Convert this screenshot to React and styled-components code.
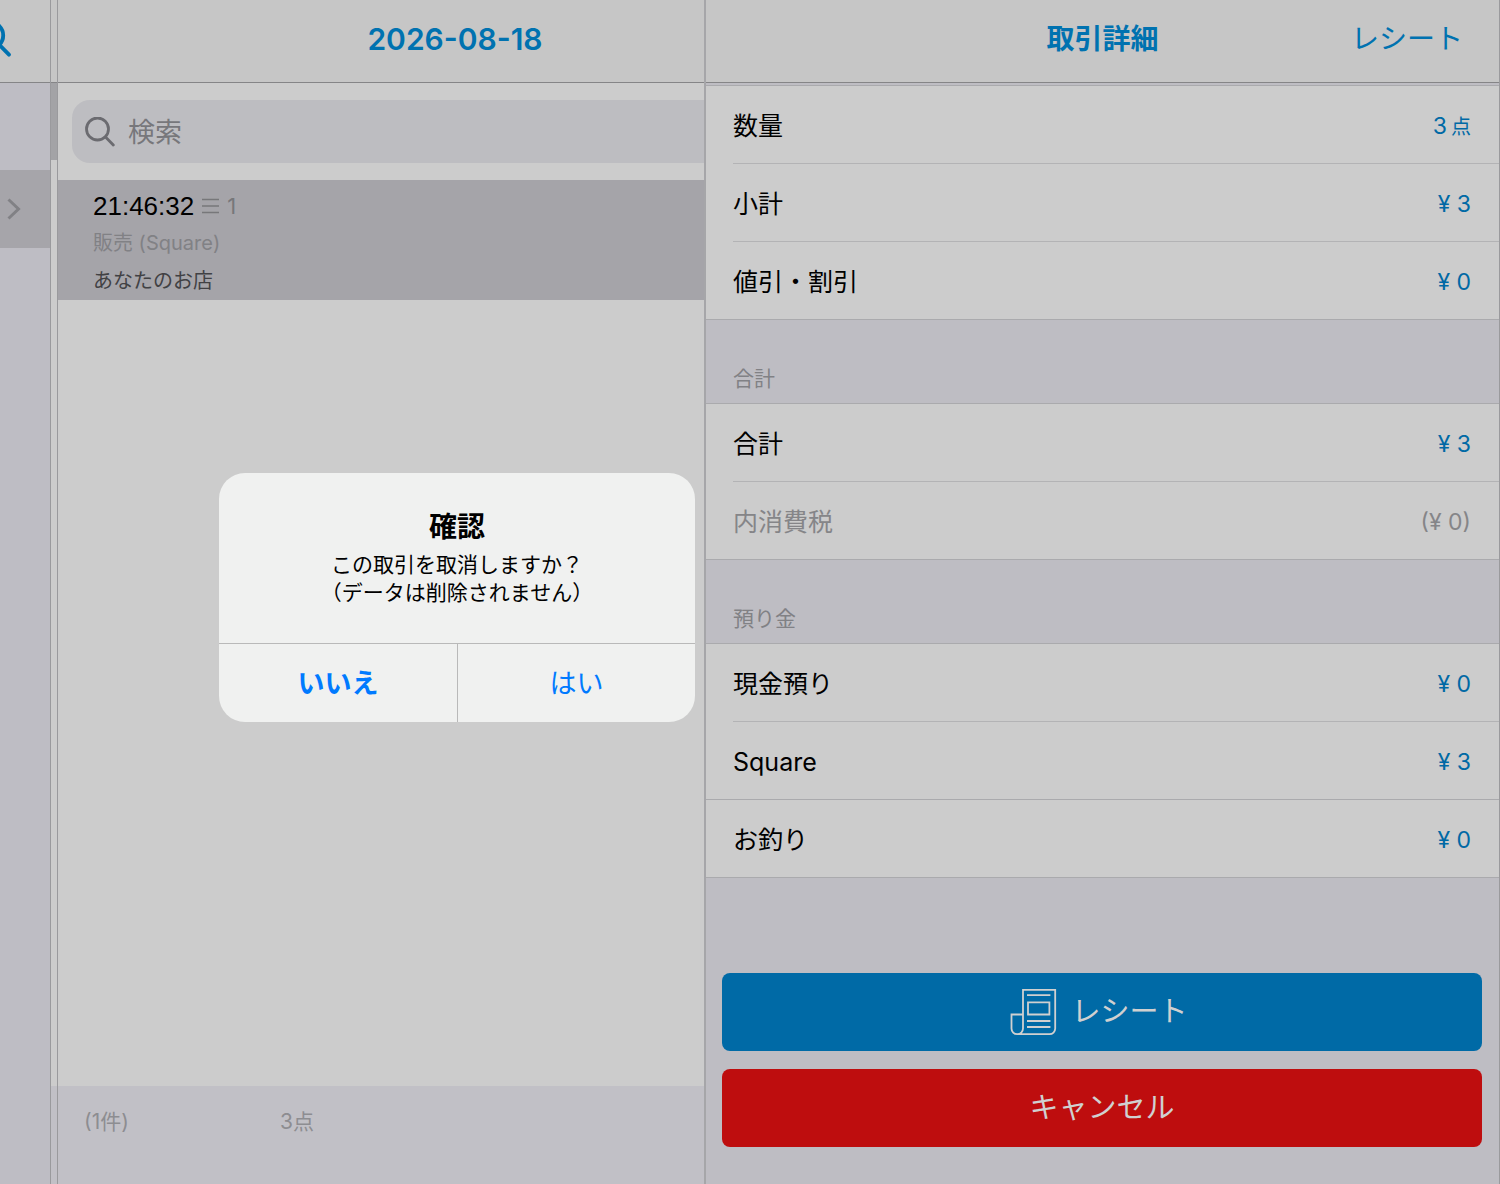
import React, { useState } from 'react'
import styled, { createGlobalStyle } from 'styled-components';

const blue = '#0072b0';
const line = '#aaaaad';

const sale = {
  time: '21:46:32',
  items: 1,
  type: '販売 (Square)',
  shop: 'あなたのお店'
}

const sections = [
  {
    rows: [
      { label: '数量', value: '3', unit: '点' },
      { label: '小計', value: '¥ 3' },
      { label: '値引・割引', value: '¥ 0' }
    ]
  },
  {
    title: '合計',
    rows: [
      { label: '合計', value: '¥ 3' },
      { label: '内消費税', value: '(¥ 0)', muted: true }
    ]
  },
  {
    title: '預り金',
    rows: [
      { label: '現金預り', value: '¥ 0' },
      { label: 'Square', value: '¥ 3', full: true },
      { label: 'お釣り', value: '¥ 0' }
    ]
  }
]

const GlobalStyle = createGlobalStyle`
  * {
    box-sizing: border-box;
  }
  body {
    margin: 0;
    background: #cccccc;
    font-family: Inter, 'Noto Sans CJK JP', sans-serif;
  }
  button, input {
    font-family: inherit;
  }
  h1, h2, h3, p, dl, dd, ul {
    margin: 0;
    padding: 0;
  }
`;

const Screen = styled.div`
  display: grid;
  grid-template-columns: 51px 7px minmax(0, 648fr) minmax(0, 794fr);
  min-height: 100vh;
  overflow: hidden;
`;

const Column = styled.div`
  display: flex;
  flex-direction: column;
  min-width: 0;
  background: ${props => props.$bg || '#cccccc'};
  border-right: ${props => props.$edge || 1}px solid ${props => props.$edgeColor || '#9a9a9d'};
`;

const Bar = styled.header`
  display: grid;
  grid-template-columns: 1fr auto 1fr;
  align-items: center;
  flex: none;
  height: 83px;
  padding: 0 36px 4px;
  background: #c6c6c6;
  border-bottom: 1px solid #858587;
`;

const ListBar = styled(Bar)`
  padding-left: 184px;
`;

const BarTitle = styled.h1`
  grid-column: 2;
  color: ${blue};
  font-size: ${props => props.$size || 28}px;
  line-height: 40px;
  font-weight: 600;
`;

const BarLink = styled.button`
  justify-self: end;
  padding: 0;
  border: 0;
  background: none;
  color: ${blue};
  font-size: 28px;
  line-height: 40px;
`;

const RailBar = styled(Bar)`
  display: flex;
  justify-content: flex-end;
  padding: 0 39px 4px 0;
`;

const GutterBar = styled(Bar)`
  padding: 0;
`;

const IconButton = styled.button`
  display: flex;
  flex: none;
  padding: 0;
  border: 0;
  background: none;
  color: ${blue};
`;

const RailItem = styled.button`
  display: flex;
  align-items: center;
  justify-content: flex-end;
  height: 78px;
  margin-top: 87px;
  padding: 0 29px 0 0;
  border: 0;
  background: #a6a5aa;
  color: #818185;
`;

const ScrollThumb = styled.div`
  height: 77px;
  background: #a3a3a6;
`;

const Spacer = styled.div`
  flex: 1;
`;

const Footer = styled.footer`
  display: flex;
  flex: none;
  height: 98px;
  padding: 20px 26px;
  background: #c1c0c6;
  color: #8d8d91;
  font-size: 21px;
  line-height: 32px;
`;

const GutterFooter = styled(Footer)`
  padding: 0;
`;

const FooterCount = styled.span`
  width: 196px;
`;

const SearchBox = styled.label`
  display: flex;
  align-items: center;
  gap: 13px;
  height: 63px;
  margin: 17px 0 17px 14px;
  padding-left: 13px;
  border-radius: 18px 0 0 18px;
  background: #bdbdc1;
  color: #6b6b70;
`;

const SearchInput = styled.input`
  flex: 1;
  min-width: 0;
  padding: 2px 0 0;
  border: 0;
  outline: 0;
  background: none;
  color: #000;
  font-size: 27px;
  line-height: 40px;
  &::placeholder {
    color: #77777b;
    opacity: 1;
  }
`;

const SaleRow = styled.li`
  display: flex;
  flex-direction: column;
  height: 120px;
  padding: 10px 35px 0;
  background: #a5a4a9;
  list-style: none;
`;

const SaleTop = styled.div`
  display: flex;
  align-items: center;
  gap: 8px;
  height: 38px;
  padding-bottom: 2px;
  color: #77777a;
  font-size: 22px;
`;

const SaleTime = styled.span`
  color: #000;
  font-family: 'Liberation Sans', sans-serif;
  font-size: 26px;
`;

const SaleText = styled.p`
  color: ${props => (props.$dark ? '#414144' : '#818185')};
  font-size: 20px;
  line-height: 38px;
`;

const ScrollEdge = styled.div`
  height: 2px;
`;

const SectionTitle = styled.h2`
  height: 83px;
  padding: 43px 27px 0;
  color: #818185;
  font-size: 21px;
  line-height: 32px;
  font-weight: 400;
`;

const Rows = styled.dl`
  background: #cccccc;
  border-top: 1px solid ${line};
`;

const Row = styled.div`
  display: flex;
  height: 78px;
  padding-left: 27px;
  border-bottom: ${props => (props.$full ? `1px solid ${line}` : 0)};
`;

const RowInner = styled.div`
  display: flex;
  flex: 1;
  align-items: center;
  justify-content: space-between;
  padding-right: 28px;
  border-bottom: ${props => (props.$full ? 0 : '1px solid #b3b3b5')};
`;

const Label = styled.dt`
  padding-top: 2px;
  color: ${props => (props.$muted ? '#858588' : '#000')};
  font-size: 25px;
  line-height: 32px;
`;

const Value = styled.dd`
  padding-top: 3px;
  color: ${props => (props.$muted ? '#858588' : '#0069a5')};
  font-size: 23px;
  line-height: 32px;
`;

const Unit = styled.span`
  padding-left: 4px;
  font-size: 20px;
`;

const Actions = styled.div`
  display: flex;
  flex-direction: column;
  gap: 18px;
  padding: 95px 17px 36px 16px;
`;

const ActionButton = styled.button`
  display: flex;
  align-items: center;
  justify-content: center;
  gap: 14px;
  height: 78px;
  padding: ${props => (props.$danger ? '0' : '0 6px 0 0')};
  border: 0;
  border-radius: 8px;
  background: ${props => (props.$danger ? '#be0d0e' : '#006aa6')};
  color: #d0d0d0;
  font-size: 29px;
  line-height: 40px;
`;

const Overlay = styled.div`
  position: absolute;
  top: 473px;
  left: 219px;
  width: 476px;
`;

const Dialog = styled.section`
  overflow: hidden;
  border-radius: 26px;
  background: #f0f1f0;
  text-align: center;
`;

const DialogBody = styled.div`
  padding: 34px 20px 36px;
`;

const DialogTitle = styled.h2`
  font-size: 28px;
  line-height: 40px;
  font-weight: 700;
`;

const DialogText = styled.p`
  padding-top: 4px;
  font-size: 21px;
  line-height: 28px;
`;

const DialogButtons = styled.div`
  display: grid;
  grid-template-columns: 1fr 1fr;
  border-top: 1px solid #b9b9b9;
`;

const DialogButton = styled.button`
  height: 78px;
  padding: 2px 0 0;
  border: 0;
  border-left: ${props => (props.$bold ? 0 : '1px solid #b9b9b9')};
  background: none;
  color: #007aff;
  font-size: 27px;
  line-height: 40px;
  font-weight: ${props => (props.$bold ? 700 : 400)};
`;

const SearchIcon = ({ size = 30, stroke = 2.8 }) => (
  <svg width={size} height={size} viewBox="0 0 30 30" fill="none" stroke="currentColor" strokeWidth={stroke} strokeLinecap="round" aria-hidden="true">
    <circle cx="12.5" cy="12" r="11" />
    <path d="M20.5 20L28.3 28" />
  </svg>
)

const ChevronIcon = () => (
  <svg width="14" height="22" viewBox="0 0 14 22" fill="none" stroke="currentColor" strokeWidth="3" aria-hidden="true">
    <path d="M1.5 1.5L11.5 11L1.5 20.5" />
  </svg>
)

const LinesIcon = () => (
  <svg width="17" height="16" viewBox="0 0 17 16" stroke="currentColor" strokeWidth="1.6" aria-hidden="true">
    <path d="M0 1.5H17M0 8H17M0 14.5H17" />
  </svg>
)

const ReceiptIcon = () => (
  <svg width="47" height="48" viewBox="0 0 47 48" fill="none" stroke="currentColor" strokeWidth="1.8" aria-hidden="true">
    <path d="M13 26.5H1.5V40.5a5.7 5.7 0 0 0 5.7 5.7H39.5a5.7 5.7 0 0 0 5.7-5.7V1.8H13V40.5a5.7 5.7 0 0 1-5.7 5.7" />
    <path d="M18 14.3H39.4V26.5H18Z" />
    <path d="M17 7.2H40.4M17 33H40.4M17 39H40.4" />
  </svg>
)

export default function App() {
  const [open, setOpen] = useState(true)

  return (
    <>
      <GlobalStyle />
      <Screen>
        <Column $bg="#bebdc4">
          <RailBar>
            <IconButton aria-label="検索"><SearchIcon size={36} stroke={3.2} /></IconButton>
          </RailBar>
          <RailItem aria-label="2026-08-18"><ChevronIcon /></RailItem>
        </Column>

        <Column>
          <GutterBar />
          <ScrollThumb />
          <Spacer />
          <GutterFooter />
        </Column>

        <Column $edge={2} $edgeColor="#a6a6a9">
          <ListBar><BarTitle $size={30}>2026-08-18</BarTitle></ListBar>
          <SearchBox>
            <SearchIcon />
            <SearchInput type="search" placeholder="検索" aria-label="検索" />
          </SearchBox>
          <ul>
            <SaleRow>
              <SaleTop>
                <SaleTime>{sale.time}</SaleTime>
                <LinesIcon />
                <span>{sale.items}</span>
              </SaleTop>
              <SaleText>{sale.type}</SaleText>
              <SaleText $dark>{sale.shop}</SaleText>
            </SaleRow>
          </ul>
          <Spacer />
          <Footer>
            <FooterCount>(1件)</FooterCount>
            <span>3点</span>
          </Footer>
        </Column>

        <Column $bg="#bebdc3">
          <Bar>
            <BarTitle>取引詳細</BarTitle>
            <BarLink>レシート</BarLink>
          </Bar>
          <ScrollEdge />
          {sections.map((section, i) => (
            <section key={i}>
              {section.title && <SectionTitle>{section.title}</SectionTitle>}
              <Rows>
                {section.rows.map((row, j) => {
                  const full = row.full || j === section.rows.length - 1
                  return (
                    <Row key={row.label} $full={full}>
                      <RowInner $full={full}>
                        <Label $muted={row.muted}>{row.label}</Label>
                        <Value $muted={row.muted}>
                          {row.value}
                          {row.unit && <Unit>{row.unit}</Unit>}
                        </Value>
                      </RowInner>
                    </Row>
                  )
                })}
              </Rows>
            </section>
          ))}
          <Actions>
            <ActionButton><ReceiptIcon />レシート</ActionButton>
            <ActionButton $danger>キャンセル</ActionButton>
          </Actions>
        </Column>
      </Screen>

      {open && (
        <Overlay>
          <Dialog role="alertdialog" aria-labelledby="confirm-title">
            <DialogBody>
              <DialogTitle id="confirm-title">確認</DialogTitle>
              <DialogText>この取引を取消しますか？<br />（データは削除されません）</DialogText>
            </DialogBody>
            <DialogButtons>
              <DialogButton $bold onClick={() => setOpen(false)}>いいえ</DialogButton>
              <DialogButton onClick={() => setOpen(false)}>はい</DialogButton>
            </DialogButtons>
          </Dialog>
        </Overlay>
      )}
    </>
  )
}
